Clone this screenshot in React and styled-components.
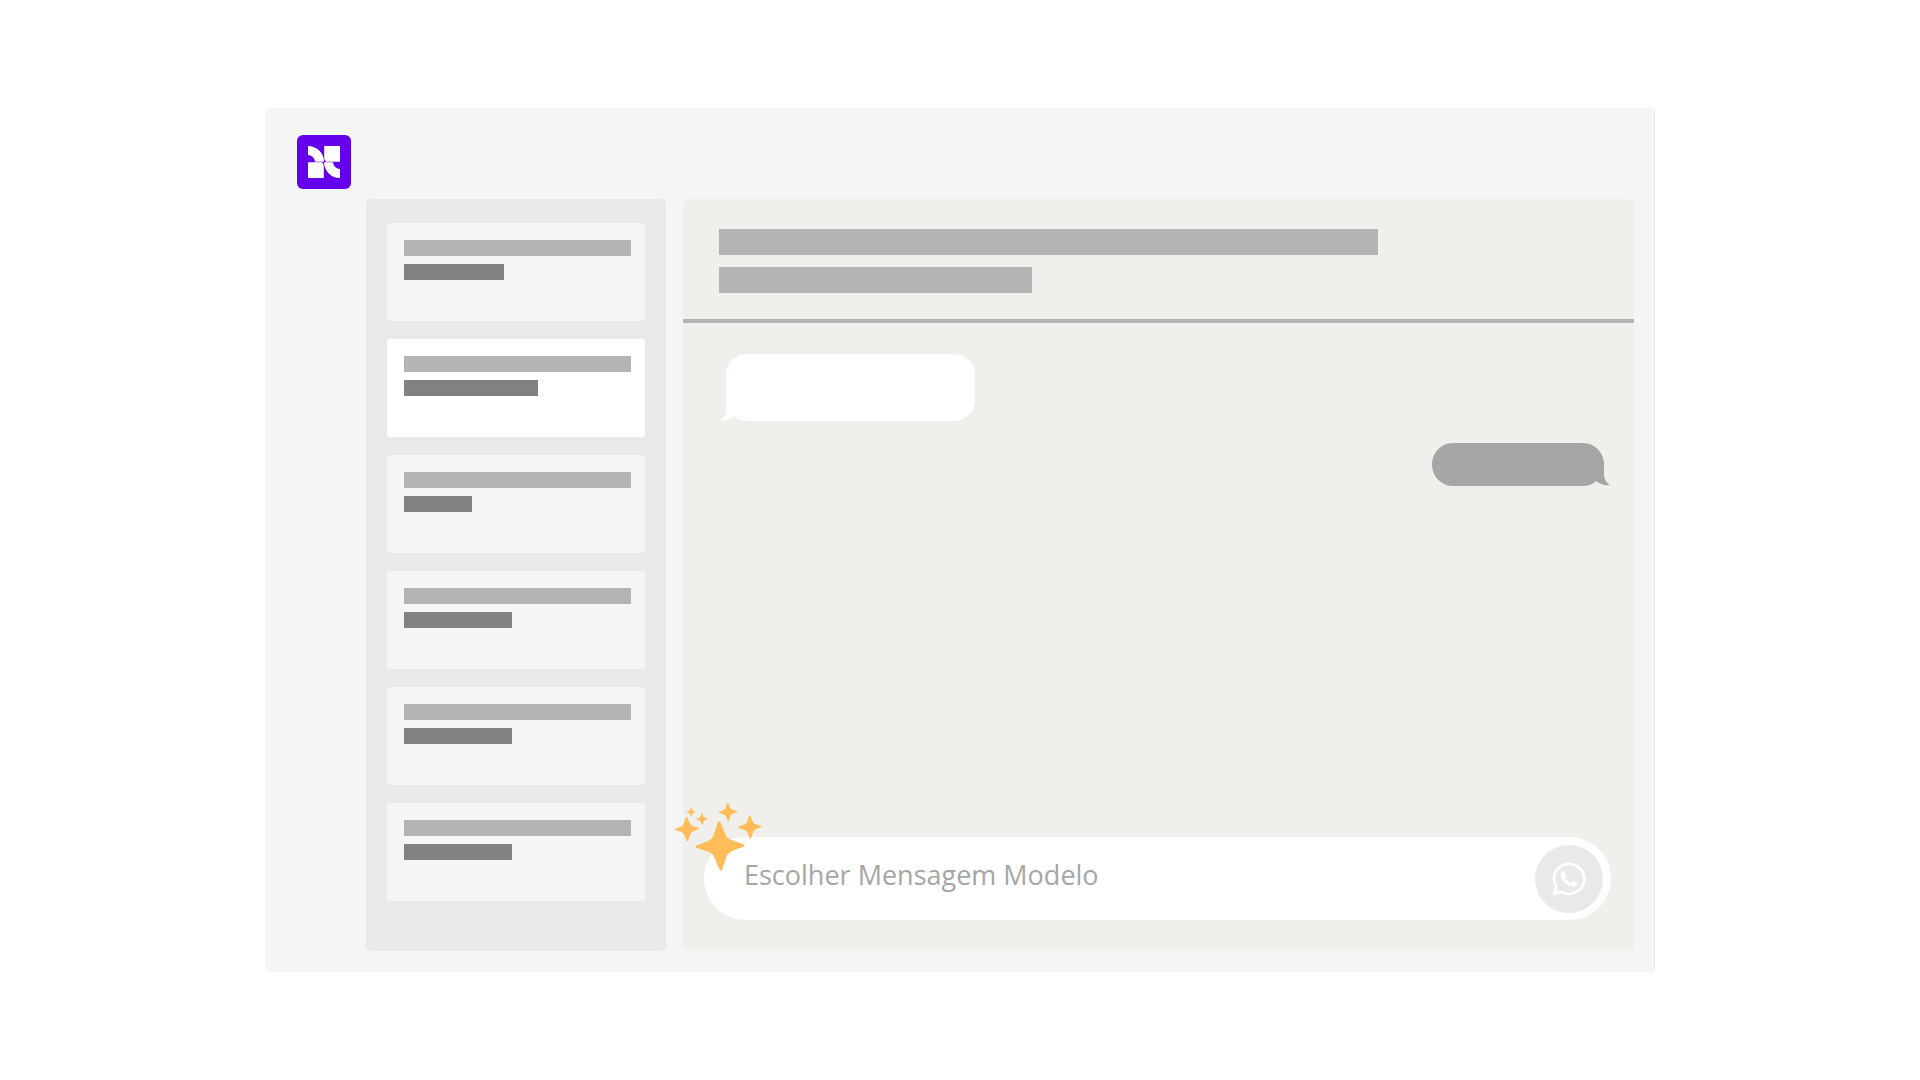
import styled, { createGlobalStyle } from 'styled-components';
import { FaWhatsapp } from 'react-icons/fa';

const colors = {
  frame: '#f5f5f5',
  sidebar: '#e9e9e7',
  chat: '#f0efeb',
  bar: '#b4b4b4',
  darkbar: '#828282',
  grey: '#a6a6a6',
  purple: '#6400eb',
  amber: '#ffbd59',
};

const GlobalStyle = createGlobalStyle`
*, *::before, *::after {
  box-sizing: border-box;
}
body {
  margin: 0;
  background-color: #fff;
  font-family: "Open Sans", "Noto Sans", sans-serif;
}
`;

const StyledPage = styled.div`
display: flex;
min-height: 100vh;
padding: 108px 265px;
`;

const StyledWindow = styled.div`
display: flex;
flex: 1;
flex-direction: column;
background-color: ${colors.frame};
border-right: 1px solid #e6e6e6;
border-radius: 5px;
`;

const StyledTopBar = styled.header`
display: flex;
padding: 27px 32px 10px;
`;

const StyledLogo = styled.div`
display: flex;
align-items: center;
justify-content: center;
width: 54px;
height: 54px;
border-radius: 6px;
background-color: ${colors.purple};
`;

const StyledBody = styled.div`
display: flex;
flex: 1;
gap: 17px;
padding: 0 20px 21px 101px;
`;

const StyledSidebar = styled.aside`
flex: 0 0 300px;
padding: 24px 21px;
border-radius: 5px;
background-color: ${colors.sidebar};
`;

const StyledList = styled.ul`
display: flex;
flex-direction: column;
gap: 18px;
margin: 0;
padding: 0;
list-style: none;
`;

const StyledCard = styled.li`
display: flex;
flex-direction: column;
gap: 8px;
height: 98px;
padding: 17px 14px 17px 17px;
border-radius: 3px;
background-color: ${(props) => (props.$selected ? '#fff' : colors.frame)};
`;

const StyledBar = styled.div`
width: ${(props) => props.$width};
max-width: 100%;
height: ${(props) => (props.$large ? '26px' : '16px')};
background-color: ${(props) => (props.$dark ? colors.darkbar : colors.bar)};
`;

const StyledChat = styled.main`
display: flex;
flex: 1;
flex-direction: column;
border-radius: 5px;
background-color: ${colors.chat};
`;

const StyledChatHeader = styled.div`
display: flex;
flex-direction: column;
gap: 12px;
padding: 30px 36px 26px;
border-bottom: 4px solid ${colors.bar};
`;

const StyledMessages = styled.div`
display: flex;
flex: 1;
flex-direction: column;
gap: 22px;
padding: 31px 30px 31px 43px;
`;

const StyledBubble = styled.div`
position: relative;
align-self: ${(props) => (props.$sent ? 'flex-end' : 'flex-start')};
width: ${(props) => (props.$sent ? '172px' : '249px')};
height: ${(props) => (props.$sent ? '43px' : '67px')};
border-radius: 21px;
background-color: ${(props) => (props.$sent ? colors.grey : '#fff')};
`;

const StyledTail = styled.svg`
position: absolute;
bottom: 0;
${(props) => (props.$sent ? 'right: -6px;' : 'left: -7px;')}
fill: ${(props) => (props.$sent ? colors.grey : '#fff')};
`;

const StyledComposer = styled.form`
position: relative;
display: flex;
align-items: center;
height: 83px;
margin: 0 23px 31px 21px;
padding: 0 8px 0 40px;
border-radius: 42px;
background-color: #fff;
`;

const StyledInput = styled.input`
flex: 1;
min-width: 0;
height: 56px;
padding: 0 0 8px;
border: 0;
outline: 0;
background: none;
color: ${colors.grey};
font-family: inherit;
font-size: 27px;
&::placeholder {
  color: ${colors.grey};
  opacity: 1;
};
`;

const StyledSend = styled.button`
display: flex;
align-items: center;
justify-content: center;
width: 68px;
height: 68px;
padding: 0;
border: 0;
border-radius: 50%;
background-color: ${colors.sidebar};
color: #fff;
cursor: pointer;
`;

// sits over the top left corner of the composer
const StyledSparkles = styled.svg`
position: absolute;
left: -30px;
top: -36px;
fill: ${colors.amber};
pointer-events: none;
`;

const conversations = [
  { id: 1, width: '100px' },
  { id: 2, width: '134px', selected: true },
  { id: 3, width: '68px' },
  { id: 4, width: '108px' },
  { id: 5, width: '108px' },
  { id: 6, width: '108px' },
];

const stars = [
  { x: 46, y: 45, size: 1 },
  { x: 13, y: 28, size: 0.5 },
  { x: 17, y: 11, size: 0.19 },
  { x: 28, y: 18, size: 0.24 },
  { x: 54, y: 11, size: 0.38 },
  { x: 76, y: 26, size: 0.48 },
];

const starPath = 'M-1 -24 Q0 -25 1 -24 C5 -16 5 -11 8 -8 C11 -5 16 -4 24 -1 Q25 0 24 1 C16 4 11 5 8 8 C5 11 5 16 1 24 Q0 25 -1 24 C-5 16 -5 11 -8 8 C-11 5 -16 4 -24 1 Q-25 0 -24 -1 C-16 -4 -11 -5 -8 -8 C-5 -11 -5 -16 -1 -24 Z';

function Logo() {
  return (
    <StyledLogo>
      <svg width="32" height="32" viewBox="0 0 32 32" fill="#fff" aria-hidden="true">
        <path d="M0 0 A16 16 0 0 1 16 15.7 H7 A7 7 0 0 0 0 9 Z" />
        <path d="M16.2 0 H32 V15.7 H18 Q16.2 14 16.2 12 Z" />
        <path d="M0 16.3 H14 Q15.8 18 15.8 20 V32 H0 Z" />
        <path d="M16 16.3 H25 A7 7 0 0 0 32 23 V32 A16 16 0 0 1 16 16.3 Z" />
      </svg>
    </StyledLogo>
  );
}

function Bubble({ sent }) {
  return (
    <StyledBubble $sent={sent}>
      {sent ? (
        <StyledTail $sent width="20" height="24" viewBox="0 0 20 24">
          <path d="M14 0 V12 C14 18 17 21 20 23 C15 24 10 22 6 19 L0 10 Z" />
        </StyledTail>
      ) : (
        <StyledTail width="22" height="24" viewBox="0 0 22 24">
          <path d="M7 0 V14 C7 18 4 22 0 24 C6 24 10 23 14 20 L22 10 Z" />
        </StyledTail>
      )}
    </StyledBubble>
  );
}

function Sparkles() {
  return (
    <StyledSparkles width="90" height="72" viewBox="0 0 90 72" aria-hidden="true">
      {stars.map(({ x, y, size }) => (
        <path key={`${x}-${y}`} d={starPath} transform={`translate(${x} ${y}) rotate(-2) scale(${size})`} />
      ))}
    </StyledSparkles>
  );
}

function App() {
  return (
    <StyledPage>
      <GlobalStyle />
      <StyledWindow>
        <StyledTopBar>
          <Logo />
        </StyledTopBar>
        <StyledBody>
          <StyledSidebar>
            <StyledList>
              {conversations.map(({ id, width, selected }) => (
                <StyledCard key={id} $selected={selected}>
                  <StyledBar $width="100%" />
                  <StyledBar $width={width} $dark />
                </StyledCard>
              ))}
            </StyledList>
          </StyledSidebar>
          <StyledChat>
            <StyledChatHeader>
              <StyledBar $width="659px" $large />
              <StyledBar $width="313px" $large />
            </StyledChatHeader>
            <StyledMessages>
              <Bubble />
              <Bubble sent />
            </StyledMessages>
            <StyledComposer onSubmit={(e) => { e.preventDefault(); }}>
              <StyledInput type="text" aria-label="Escolher Mensagem Modelo" placeholder="Escolher Mensagem Modelo" />
              <StyledSend type="submit" aria-label="WhatsApp">
                <FaWhatsapp size={38} />
              </StyledSend>
              <Sparkles />
            </StyledComposer>
          </StyledChat>
        </StyledBody>
      </StyledWindow>
    </StyledPage>
  );
}

export default App;
